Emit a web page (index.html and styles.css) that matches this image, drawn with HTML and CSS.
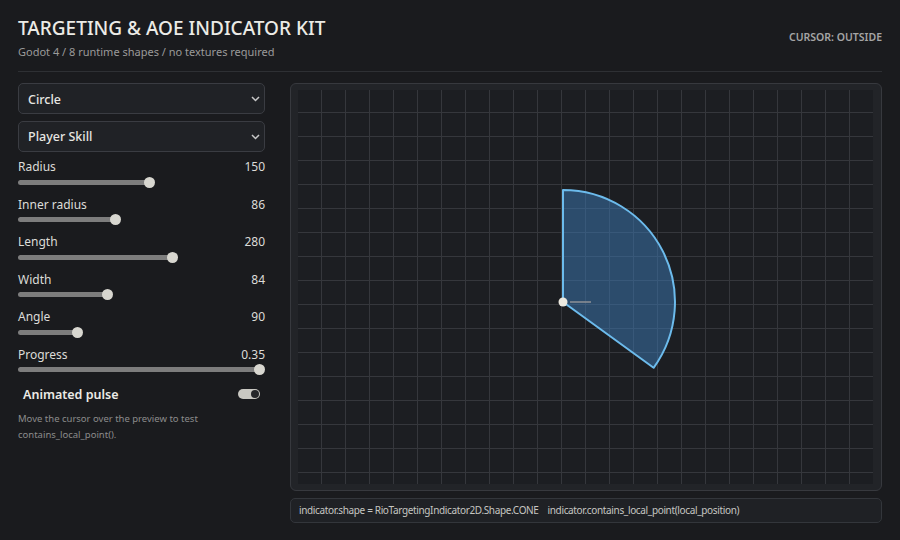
FILE: index.html
```html
<!DOCTYPE html>
<html lang="en">

<head>
    <meta charset="UTF-8">
    <meta name="viewport" content="width=device-width, initial-scale=1.0">
    <title>Targeting &amp; AOE Indicator Kit</title>
    <link rel="stylesheet" href="styles.css">
</head>

<body>
    <div class="page">
        <header class="top">
            <div>
                <h1>TARGETING &amp; AOE INDICATOR KIT</h1>
                <p class="sub">Godot 4 / 8 runtime shapes / no textures required</p>
            </div>
            <div class="status">CURSOR: OUTSIDE</div>
        </header>

        <div class="main">
            <div class="controls">
                <div class="select">
                    <span>Circle</span>
                    <svg class="chev" width="9" height="6" viewBox="0 0 9 6"><path d="M1 1 L4.5 4.5 L8 1" fill="none" stroke="#c8c8c8" stroke-width="1.5"/></svg>
                </div>
                <div class="select">
                    <span>Player Skill</span>
                    <svg class="chev" width="9" height="6" viewBox="0 0 9 6"><path d="M1 1 L4.5 4.5 L8 1" fill="none" stroke="#c8c8c8" stroke-width="1.5"/></svg>
                </div>

                <div class="slider-row">
                    <div class="label"><span>Radius</span><span>150</span></div>
                    <div class="track"><div class="fill" style="width:131px"></div></div>
                </div>
                <div class="slider-row">
                    <div class="label"><span>Inner radius</span><span>86</span></div>
                    <div class="track"><div class="fill" style="width:97px"></div></div>
                </div>
                <div class="slider-row">
                    <div class="label"><span>Length</span><span>280</span></div>
                    <div class="track"><div class="fill" style="width:154px"></div></div>
                </div>
                <div class="slider-row">
                    <div class="label"><span>Width</span><span>84</span></div>
                    <div class="track"><div class="fill" style="width:89px"></div></div>
                </div>
                <div class="slider-row">
                    <div class="label"><span>Angle</span><span>90</span></div>
                    <div class="track"><div class="fill" style="width:59px"></div></div>
                </div>
                <div class="slider-row">
                    <div class="label"><span>Progress</span><span>0.35</span></div>
                    <div class="track"><div class="fill" style="width:241px"></div></div>
                </div>

                <div class="toggle-row">
                    <span>Animated pulse</span>
                    <div class="toggle"><div class="knob"></div></div>
                </div>
                <p class="help">Move the cursor over the preview to test contains_local_point().</p>
            </div>

            <div class="right">
                <div class="preview">
                    <div class="canvas">
                        <svg class="shape" width="575" height="394" viewBox="0 0 575 394">
                            <path d="M265 212 L265 100 A112 112 0 0 1 355.6 277.8 Z" fill="rgba(60,122,182,0.5)" stroke="#6cbbec" stroke-width="2" stroke-linejoin="round"/>
                            <line x1="272" y1="212" x2="293" y2="212" stroke="#8e9196" stroke-width="1.5"/>
                            <circle cx="265" cy="212" r="4.5" fill="#ece9df"/>
                        </svg>
                    </div>
                </div>
                <div class="code">indicator.shape = RioTargetingIndicator2D.Shape.CONE&nbsp;&nbsp;&nbsp;&nbsp;indicator.contains_local_point(local_position)</div>
            </div>
        </div>
    </div>
</body>

</html>
```

FILE: styles.css
```css
body {
    margin: 0;
    background-color: #1a1b1e;
    font-family: "Noto Sans", "Open Sans", sans-serif;
    color: #e2e2e2;
}

.page {
    padding: 0 18px;
}

.top {
    display: flex;
    justify-content: space-between;
    align-items: flex-start;
    padding-top: 15px;
    height: 56px;
    border-bottom: 1px solid #2e3034;
}

h1 {
    margin: 0;
    font-size: 19px;
    font-weight: 500;
    line-height: 26px;
    color: #ecebe6;
}

.sub {
    margin: 3px 0 0;
    font-size: 11px;
    color: #9a9a9a;
}

.status {
    margin-top: 15px;
    font-size: 10.5px;
    font-weight: 600;
    color: #a5a5a5;
}

.main {
    display: flex;
    gap: 25px;
    padding-top: 11px;
}

.controls {
    width: 247px;
    display: flex;
    flex-direction: column;
}

.select {
    height: 28px;
    border: 1px solid #3a3c42;
    border-radius: 5px;
    background-color: #202226;
    display: flex;
    align-items: center;
    justify-content: space-between;
    padding: 1px 4px 0 9px;
    margin-bottom: 6.5px;
    font-size: 12.5px;
    font-weight: 500;
    color: #e6e6e2;
}

.slider-row {
    height: 37.5px;
}

.label {
    display: flex;
    justify-content: space-between;
    font-size: 12px;
    line-height: 18px;
    color: #dcdcd8;
}

.track {
    height: 12px;
    display: flex;
    align-items: center;
}

.fill {
    position: relative;
    height: 5px;
    border-radius: 3px;
    background-color: #7d7d7d;
}

.fill::after {
    content: "";
    position: absolute;
    right: -6px;
    top: -3px;
    width: 11px;
    height: 11px;
    border-radius: 50%;
    background-color: #d8d7d0;
}

.toggle-row {
    display: flex;
    justify-content: space-between;
    align-items: center;
    padding: 0 5px;
    height: 22px;
    font-size: 12.5px;
    font-weight: 600;
    color: #ecebe6;
}

.toggle {
    width: 22px;
    height: 10px;
    border-radius: 5px;
    background-color: #c9c8c2;
    position: relative;
}

.knob {
    position: absolute;
    right: 1px;
    top: 1px;
    width: 8px;
    height: 8px;
    border-radius: 50%;
    background-color: #26272a;
}

.help {
    margin: 6px 0 0;
    font-size: 9.5px;
    line-height: 16px;
    color: #8c8c8c;
}

.right {
    flex: 1;
    display: flex;
    flex-direction: column;
    gap: 7px;
}

.preview {
    height: 393px;
    border: 1px solid #37393e;
    border-radius: 6px;
    background-color: #222428;
    padding: 6px 8px 7px 7px;
}

.canvas {
    position: relative;
    height: 394px;
    background-color: #1c1e22;
    background-image:
        linear-gradient(to right, transparent 23px, #35373c 23px, #35373c 24.5px, transparent 24.5px),
        linear-gradient(to bottom, transparent 22px, #35373c 22px, #35373c 23.5px, transparent 23.5px);
    background-size: 24px 24px;
}

.shape {
    position: absolute;
    left: 0;
    top: 0;
}

.code {
    height: 23px;
    border: 1px solid #33363b;
    border-radius: 5px;
    background-color: #1f2125;
    padding-left: 8px;
    font-size: 10px;
    line-height: 23px;
    color: #c6c6c2;
    letter-spacing: -0.35px;
}
```
